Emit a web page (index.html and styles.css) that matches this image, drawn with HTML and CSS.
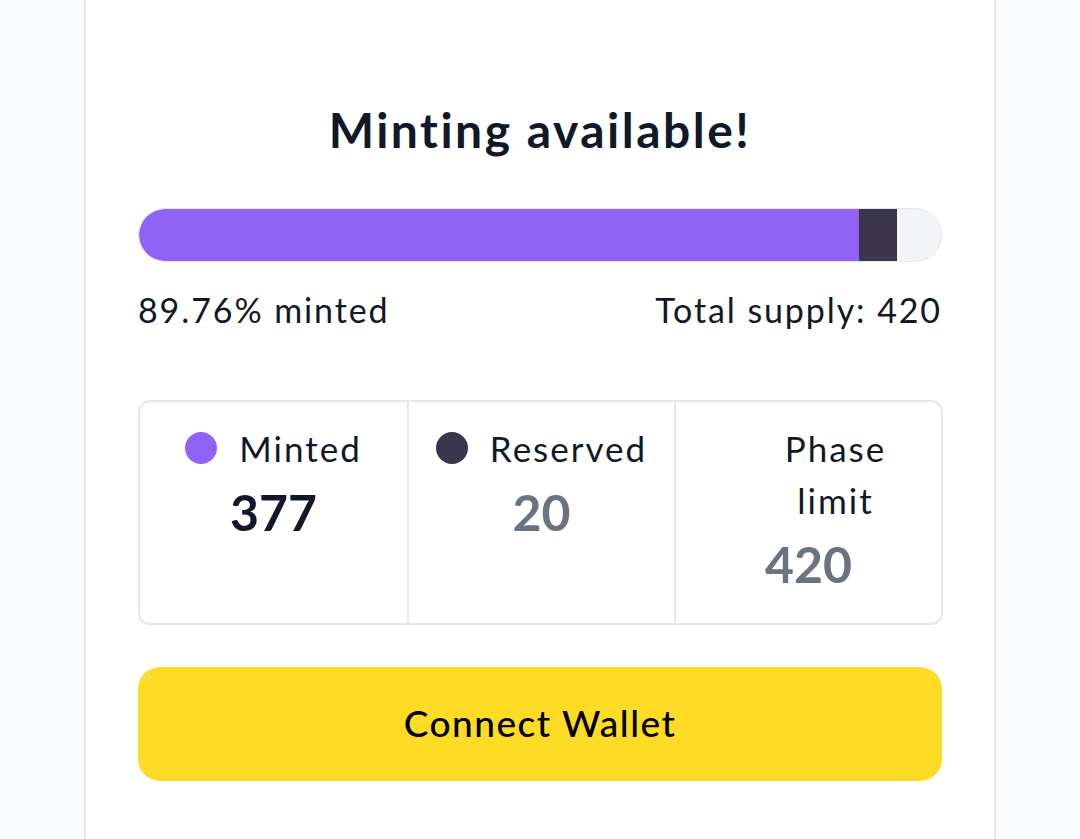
FILE: index.html
```html
<!DOCTYPE html>
<html lang="en">
<head>
<meta charset="utf-8">
<title>Minting</title>
<link rel="stylesheet" href="styles.css">
</head>
<body>
<main class="card">
  <h1 class="title">Minting available!</h1>
  <div class="bar">
    <div class="bar-minted" style="width: 89.76%"></div>
    <div class="bar-reserved" style="width: 4.76%"></div>
  </div>
  <div class="bar-meta">
    <span>89.76% minted</span>
    <span>Total supply: 420</span>
  </div>
  <div class="stats">
    <div class="stat">
      <div class="stat-label"><span class="dot dot-minted"></span><span class="label-text">Minted</span></div>
      <div class="stat-value value-dark">377</div>
    </div>
    <div class="stat">
      <div class="stat-label"><span class="dot dot-reserved"></span><span class="label-text">Reserved</span></div>
      <div class="stat-value value-muted">20</div>
    </div>
    <div class="stat">
      <div class="stat-label"><span class="dot dot-none"></span><span class="label-text">Phase limit</span></div>
      <div class="stat-value value-muted">420</div>
    </div>
  </div>
  <button class="connect">Connect Wallet</button>
</main>
</body>
</html>
```

FILE: styles.css
```css
* { box-sizing: border-box; }
html, body { margin: 0; padding: 0; }
body {
  background: #f9fafb;
  font-family: Lato, "Noto Sans", sans-serif;
  color: #111827;
  height: 839px;
  overflow: hidden;
}
.card {
  margin-left: 84px;
  width: 912px;
  height: 839px;
  background: #ffffff;
  border-left: 2px solid #e5e7eb;
  border-right: 2px solid #e5e7eb;
  padding: 96px 52px 0;
  display: flex;
  flex-direction: column;
}
.title {
  margin: 0;
  text-align: center;
  font-size: 48px;
  line-height: 68px;
  font-weight: 700;
  letter-spacing: 2.5px;
  color: #111827;
}
.bar {
  margin-top: 44px;
  height: 54px;
  flex: none;
  border: 1px solid #e5e7eb;
  border-radius: 27px;
  background: #f3f4f6;
  overflow: hidden;
  display: flex;
}
.bar-minted {
  background: #9063f7;
  border-radius: 26px 0 0 26px;
  height: 100%;
}
.bar-reserved {
  background: #3b364c;
  height: 100%;
}
.bar-meta {
  margin-top: 26px;
  display: flex;
  justify-content: space-between;
  font-size: 34px;
  line-height: 44px;
  letter-spacing: 1.9px;
  color: #111827;
}
.stats {
  margin-top: 68px;
  height: 225px;
  flex: none;
  margin-right: -1px;
  border: 2px solid #e5e7eb;
  border-radius: 12px;
  display: grid;
  grid-template-columns: 1fr 1fr 1fr;
}
.stat {
  padding: 20px 24px 0;
  display: flex;
  flex-direction: column;
  align-items: center;
}
.stat + .stat { border-left: 2px solid #e5e7eb; }
.stat-label {
  display: flex;
  justify-content: center;
  align-items: flex-start;
  gap: 22px;
  width: 100%;
  font-size: 35px;
  line-height: 52px;
  letter-spacing: 2px;
}
.label-text { text-align: center; min-width: 0; }
.dot {
  flex: none;
  width: 32px;
  height: 32px;
  border-radius: 50%;
  margin-top: 10px;
}
.dot-minted { background: #9063f7; }
.dot-reserved { background: #3b364c; }
.dot-none { background: transparent; }
.stat-value {
  font-size: 50px;
  line-height: 76px;
  font-weight: 700;
}
.value-dark { color: #111827; }
.value-muted { color: #6b7280; }
.connect {
  margin-top: 42px;
  height: 114px;
  width: 100%;
  flex: none;
  border: none;
  border-radius: 22px;
  background: #fedb24;
  color: #000000;
  font-family: inherit;
  font-size: 37px;
  font-weight: 500;
  letter-spacing: 1.5px;
  padding: 0 0 4px;
  cursor: pointer;
}
```
